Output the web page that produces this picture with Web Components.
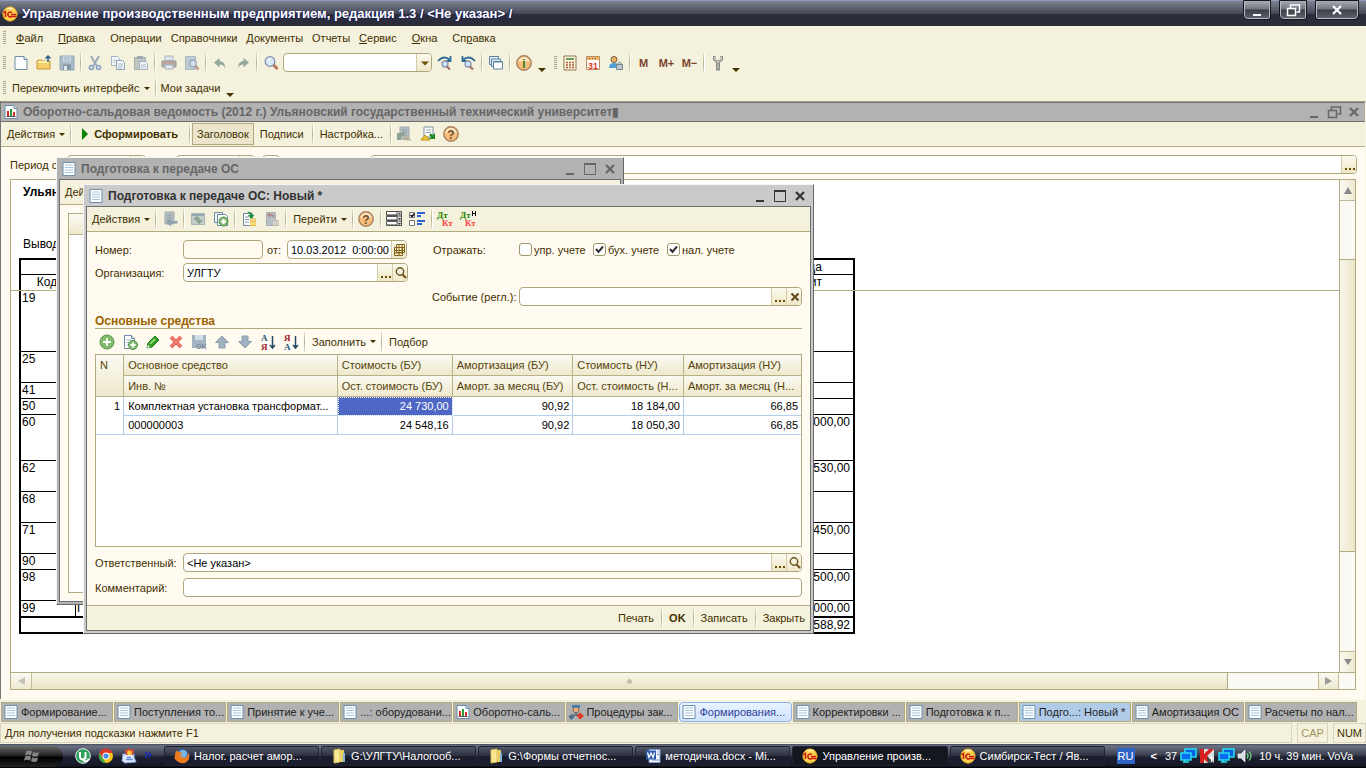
<!DOCTYPE html>
<html lang="ru">
<head>
<meta charset="utf-8">
<title>Управление производственным предприятием</title>
<style>
html, body { margin: 0; height: 100%; }
body { overflow: hidden; font: 11px/14px "Liberation Sans", Arial, sans-serif; color: #3f2f00; background: #f4f1dc; }
</style>
</head>
<body>
<enterprise-app></enterprise-app>
<script>
const define = (name, css, html) => {
  const tpl = document.createElement('template');
  customElements.define(name, class extends HTMLElement {
    connectedCallback() {
      if (this.shadowRoot) return;
      tpl.innerHTML = `<style>*{box-sizing:border-box}${css}</style>` + (typeof html === 'function' ? html(this) : html);
      this.attachShadow({ mode: 'open' }).append(tpl.content.cloneNode(true));
    }
  });
};

const page = '<path d="M2 1.5h9l3 3v10H2z" fill="#fdfeff" stroke="#6f8ca6"/><path d="M11 1.5v3h3" fill="#cfe0ee" stroke="#6f8ca6"/>';
const plus = (x, y, r) => `<circle cx="${x}" cy="${y}" r="${r}" fill="#7fbd6c" stroke="#5b9354"/><path d="M${x - r * .55} ${y}h${r * 1.1}M${x} ${y - r * .55}v${r * 1.1}" stroke="#fff" stroke-width="2"/>`;
const lens = '<circle cx="7" cy="6.500" r="4.800" fill="#dbe9f7" stroke="#7d8db5" stroke-width="1.300"/><path d="M4.500 5.500q1.500-2.500 4-1.500" stroke="#fff" fill="none"/><path d="M10.500 10l4 4" stroke="#b4735c" stroke-width="2.800"/>';
const grayPage = '<path d="M3 1h9v12H3z" fill="#b4bdc0" stroke="#a2acb0"/><path d="M5 4h5M5 6.500h5M5 9h5" stroke="#8f9a9e"/>';
const letters = (a, ca, b, cb) => `<text x="1" y="7" font-family="Liberation Serif,serif" font-weight="700" font-size="9" fill="${ca}">${a}</text><text x="1" y="16" font-family="Liberation Serif,serif" font-weight="700" font-size="9" fill="${cb}">${b}</text><path d="M12.500 2v11M10 11l2.500 3 2.500-3" stroke="#254a66" stroke-width="1.500" fill="none"/>`;
const ball = (ch, c) => `<circle cx="8" cy="8" r="7.200" fill="#f7bf7b" stroke="#a7815f" stroke-width="1.400"/><path d="M2.500 7a5.500 5 0 0 1 11 0q-5-2-11 0" fill="#ffe6bd"/><text x="8" y="12.500" text-anchor="middle" font-family="Liberation Sans,sans-serif" font-weight="700" font-size="12" fill="${c}">${ch}</text>`;
const ICONS = {
  onec: '<circle cx="8" cy="8" r="7.200" fill="#fbd24e" stroke="#d99a1c" stroke-width=".8"/><path d="M4 2.500q4-2 8 0q-4 2-8 0" fill="#fff3b8"/><path d="M1.500 7l2-1.500V11M9.800 6.600a2.400 2.400 0 1 0-.2 3.900H14.500M9 8.600h5" fill="none" stroke="#d11a10" stroke-width="1.500"/>',
  fresh: page,
  open: '<path d="M1 6l1-1h4l1 1h7v8H1z" fill="#f7cf68" stroke="#c79632"/><path d="M2 7h11" stroke="#ffeeb0" stroke-width="2"/><path d="M12 7V1M9.500 3.500L12 1l2.500 2.500" fill="none" stroke="#2d5f86" stroke-width="1.500"/>',
  save: '<path d="M1 1h14v14H1z" fill="#a9bac8" stroke="#93a8b8"/><path d="M4 1.500h8v5H4z" fill="#d4dee5"/><path d="M5 3h6M5 5h6" stroke="#9fb1bf"/><path d="M4 9.500h8V15H4z" fill="#8195a5"/><path d="M5 11h3v4H5z" fill="#dfe6ea"/>',
  cut: '<path d="M4 1l5.500 9.500M12 1L6.500 10.500" stroke="#9bacbd" stroke-width="2"/><circle cx="4.500" cy="12.500" r="2" fill="none" stroke="#839fc2" stroke-width="1.600"/><circle cx="11.500" cy="12.500" r="2" fill="none" stroke="#839fc2" stroke-width="1.600"/>',
  copy: '<path d="M1.500 1.500h6l2 2v7h-8z" fill="#f4f7fa" stroke="#9fb2c6"/><path d="M3 5h4M3 7h4" stroke="#b8c6d2"/><path d="M6.500 5.500h6l2 2v7h-8z" fill="#f4f7fa" stroke="#8da5be"/><path d="M8 9h5M8 11h5M8 13h4" stroke="#a9b9c8"/>',
  paste: '<path d="M1.500 2.500h11v12h-11z" fill="#c0c6be" stroke="#a5ada6"/><path d="M4 1h6v3H4z" fill="#9fabb1"/><path d="M6.500 6.500h6l2 2v6h-8z" fill="#eef2f4" stroke="#9fb2c6"/><path d="M8 10h5M8 12h5" stroke="#a9b9c8"/>',
  print: '<path d="M4 1h8v5H4z" fill="#dde5ec" stroke="#a8b4bf"/><path d="M1 6h14v6H1z" fill="#b3b0ae" stroke="#999"/><path d="M2 8h12" stroke="#cf9b8b"/><path d="M4 10h8v4H4z" fill="#e3e8ec" stroke="#a8b4bf"/>',
  preview: '<path d="M1.500 1.500h10v13h-10z" fill="#c0cbd4" stroke="#aab8c3"/><circle cx="9" cy="8.500" r="3.300" fill="#d6e0ea" stroke="#93a5b9" stroke-width="1.300"/><path d="M11.500 11l3 3.500" stroke="#c59788" stroke-width="2.400"/>',
  undo: '<path d="M2 7.500L7.500 3v3q6 .5 5.500 7.500q-1-4-5.500-4v3z" fill="#94a89b"/>',
  redo: '<path d="M14 7.500L8.500 3v3q-6 .5-5.500 7.500q1-4 5.500-4v3z" fill="#94a89b"/>',
  lens,
  findNext: '<path d="M1 6q6-6.500 12-1M13.500 1v5H9" fill="none" stroke="#2f6b92" stroke-width="1.800"/><circle cx="8" cy="9" r="3" fill="#d3e4fa" stroke="#8696b3" stroke-width="1.300"/><path d="M10 11.500l3 3" stroke="#a46f5e" stroke-width="2.200"/>',
  findPrev: '<path d="M15 6q-6-6.500-12-1M2.500 1v5H7" fill="none" stroke="#2f6b92" stroke-width="1.800"/><circle cx="8" cy="9" r="3" fill="#d3e4fa" stroke="#8696b3" stroke-width="1.300"/><path d="M10 11.500l3 3" stroke="#a46f5e" stroke-width="2.200"/>',
  windows: '<path d="M1.500 1.500h9v8h-9z" fill="#e3edf5" stroke="#5c85a4"/><path d="M3.500 4h9v7.500h-9z" fill="#dce8f2" stroke="#5c85a4"/><path d="M5.500 6.500h9v7.500h-9z" fill="#fff" stroke="#5c85a4"/><path d="M5.500 7h9" stroke="#5c85a4"/>',
  info: ball('i', '#2f7d1b'), help: ball('?', '#6b4b33'),
  calc: '<path d="M2 1h12v14H2z" fill="#fff4dc" stroke="#8d7755"/><path d="M4 3h8v2H4z" fill="#63a25b"/><path d="M4 7.500h8M4 10h8M4 12.500h8" stroke="#a85b3e" stroke-width="1.500" stroke-dasharray="2 1"/>',
  calendar: '<path d="M1.500 1.500h13v13h-13z" fill="#fff" stroke="#b88d63"/><path d="M2 2h12v3H2z" fill="#efb567"/><path d="M4 3.500h8" stroke="#845" stroke-dasharray="1 2"/><text x="8" y="13.500" text-anchor="middle" font-family="Liberation Sans,sans-serif" font-size="9" font-weight="700" fill="#e23a22">31</text>',
  userLock: '<circle cx="6" cy="4.500" r="3" fill="#f0b36a" stroke="#735639"/><path d="M1 13q0-5 5-5t5 5z" fill="#4fa2d8"/><path d="M8.500 9.500h6v5h-6z" fill="#bfc9cf" stroke="#72828d"/><path d="M10 9.500V8q1.500-2 3 0v1.500" fill="none" stroke="#72828d"/>',
  wrench: '<path d="M4.500 1q-1.500 5 3.500 5.500Q13 6 11.500 1" fill="none" stroke="#858783" stroke-width="2.600"/><path d="M8 6v9.500" stroke="#858783" stroke-width="4"/><path d="M4.500 2q-.5 4 3.500 4.500Q12 6 11.500 2M8 6.500v8" fill="none" stroke="#d9dad6"/>',
  report: page + '<path d="M5 12V7M11 12V8" stroke="#d92d2d" stroke-width="2"/><path d="M8 12V5" stroke="#2f9a3a" stroke-width="2"/><path d="M3.500 12.500h9" stroke="#555"/>',
  doc: '<path d="M2 1.500h12v13H2z" fill="#fbfdff" stroke="#6d90ab"/><path d="M4 4h8M4 6.500h8M4 9h8M4 11.500h8" stroke="#a9c5d8"/>',
  play: '<path d="M6 2l6 6-6 6z" fill="#078407"/>',
  loadGray: grayPage + '<path d="M0 7h5v-2l3 4-4 2v3H0z" fill="#8ea193"/><path d="M5 14l4-4 6 4.500z" fill="#b9b09c"/>',
  loadGreen: '<path d="M4 1h9v10H4z" fill="#fff" stroke="#7c8f9f"/><path d="M6 4h5M6 6.500h5" stroke="#90a6b5"/><path d="M15 7v6H9l2-2-2-2 2-1.500 2 1.500z" fill="#248a24"/><path d="M1 14l4-5 5 5z" fill="#ecc52e" stroke="#b8941c"/>',
  goBack: grayPage + '<path d="M15.500 10H9V7l-5 4.500 5 4v-3h6.500z" fill="#8fa0ae"/>',
  refresh: '<path d="M1.500 2.500h13v11h-13z" fill="#c2cccb" stroke="#aab5b8"/><path d="M2 4h12" stroke="#97a9b4" stroke-width="2"/><path d="M4 9l3-3v2h3M12 9l-3 3v-2H6" fill="none" stroke="#7d9b84" stroke-width="1.500"/>',
  copyAdd: '<path d="M1.500 1.500h8v10h-8z" fill="#eef3f7" stroke="#6f8ca6"/><path d="M4.500 3.500h8l2 2v9h-10z" fill="#fff" stroke="#6f8ca6"/>' + plus(10.5, 10.5, 4.5),
  post: '<path d="M2.500 2.500h9v12h-9z" fill="#fff" stroke="#6f8ca6"/><path d="M4 6h4M4 8.500h4M4 11h4" stroke="#7d97aa"/><path d="M6 1q5-1 5 3h2.500L10 8 7 4h2q0-2-3-3" fill="#23913a"/><path d="M9 9h6v6H9z" fill="#f0be38"/><path d="M9 11h6M9 13h6" stroke="#fff1b4"/><ellipse cx="12" cy="9" rx="3" ry="1.400" fill="#ffe696" stroke="#cf9b25" stroke-width=".6"/>',
  unpost: '<path d="M2.500 1.500h9v13h-9z" fill="#b7c0c6" stroke="#a5b0b8"/><path d="M10 7q1-4-4-4V1L3 4l3 3V5q3 0 4 2" fill="#b48684"/><path d="M9 9h6v6H9z" fill="#c4c0b0"/><path d="M9 11h6M9 13h6" stroke="#e0ddd0"/>',
  listView: '<path d="M.500 .500h15v4h-15zM.500 5.500h15v4h-15zM.500 10.500h15v4h-15z" fill="#fff" stroke="#555"/><path d="M1 3.500h10M1 8.500h10M1 13.500h10" stroke="#9a9a9a"/><path d="M11 .500h4.500v14H11z" fill="#ddd" stroke="#555"/><path d="M11 5h5M11 10h5" stroke="#555"/><path d="M12 3.500h3l-1.500-2zM12 7h3l-1.500 2zM12 12h3l-1.500 2z" fill="#333"/>',
  checks: '<path d="M.500 1.500h5v5h-5zM.500 9.500h5v5h-5z" fill="#fff" stroke="#777"/><path d="M1.500 4l1.500 1.500 2.500-3" fill="none" stroke="#000" stroke-width="1.300"/><path d="M8 2h8M8 5h4M8 10h8M8 13h5" stroke="#2b63d2" stroke-width="2"/>',
  dtkt: '<text x="0" y="7" font-family="Liberation Serif,serif" font-weight="700" font-size="9" fill="#267f00">Дт</text><text x="5" y="15" font-family="Liberation Serif,serif" font-weight="700" font-size="9" fill="#ff4040">Кт</text>',
  dtktn: '<text x="0" y="7" font-family="Liberation Serif,serif" font-weight="700" font-size="9" fill="#267f00">Дт</text><text x="5" y="15" font-family="Liberation Serif,serif" font-weight="700" font-size="9" fill="#ff4040">Кт</text><path d="M12.500 0v5M15.500 0v5M12 2.500h4" stroke="#111"/>',
  add: plus(8, 8, 7), addCopy: '<path d="M2.500 1.500h7l3 3v10h-10z" fill="#fff" stroke="#6f8ca6"/><path d="M9.500 1.500v3h3" fill="#cfe0ee" stroke="#6f8ca6"/><path d="M4.500 6h5M4.500 8.500h4M4.500 11h3" stroke="#9fb6c8"/>' + plus(11, 11, 4.5),
  edit: '<path d="M2 14l1-5 7-7 4 4-7 7z" fill="#35a025" stroke="#1e7414"/><path d="M5 10l5-5" stroke="#a5e58e" stroke-width="1.500"/><path d="M2 14l1-3 2 2z" fill="#fff"/>',
  del: '<path d="M3 3l10 10M13 3L3 13" stroke="#dc5046" stroke-width="3.500"/><path d="M3 3l10 10M13 3L3 13" stroke="#f6877b" stroke-width="1.500"/>',
  saveOk: '<path d="M1 1h14v13H1z" fill="#a3b5c3"/><path d="M4 1h8v5H4z" fill="#d4dee5"/><text x="5" y="14.500" font-family="Liberation Sans,sans-serif" font-weight="700" font-size="7" fill="#788b99">OK</text>',
  up: '<path d="M8 2l6.500 6.500H11V14H5V8.500H1.500z" fill="#9fb0bf" stroke="#8d9eac"/>',
  down: '<path d="M8 14l6.500-6.500H11V2H5v5.500H1.500z" fill="#9fb0bf" stroke="#8d9eac"/>',
  sortAsc: letters('А', '#235a7c', 'Я', '#a0202a'), sortDesc: letters('Я', '#a0202a', 'А', '#235a7c'),
  grid: '<path d="M2.500 5.500h8v8h-8zM4.500 2.500h8v8h-8z" fill="#fff4cc" stroke="#806019"/><path d="M3 8.500h9M3 11h7M5 5.500h7M7 3v10M10 3v8" fill="none" stroke="#806019"/>',
  search: '<circle cx="7" cy="6.500" r="3.700" fill="none" stroke="#6b5019" stroke-width="1.400"/><path d="M9.500 9.500l3.500 3.500" stroke="#6b5019" stroke-width="2"/>',
  cross: '<path d="M4.500 4.500l7 7M11.500 4.500l-7 7" stroke="#63491a" stroke-width="2"/>',
  dots: '<path d="M3 11h2v2H3zM7 11h2v2H7zM11 11h2v2h-2z" fill="#6b4c00"/>',
  caret: '<path d="M4 6.500h8l-4 4z" fill="#6b5208"/>',
  min: '<path d="M4 13h8" stroke="currentColor" stroke-width="2"/>',
  max: '<path d="M2.500 3h11v10.500h-11z" fill="none" stroke="currentColor"/><path d="M2 3h12" stroke="currentColor" stroke-width="2"/>',
  restore: '<path d="M5.500 6V3h9v7h-3" fill="none" stroke="currentColor" stroke-width="1.500"/><path d="M2.500 6.500h8v7h-8z" fill="none" stroke="currentColor" stroke-width="1.500"/>',
  close: '<path d="M4 4l8 8M12 4l-8 8" stroke="currentColor" stroke-width="2.200"/>',
  proc: '<path d="M4 1h8v3H4z" fill="#3d83b6"/><circle cx="8" cy="6" r="3" fill="#e2b084" stroke="#8a6a55"/><path d="M8 8v3H3v2M8 11h4" stroke="#5a6d7c" stroke-width="1.500" fill="none"/><path d="M0 12h7l-3.500 4z" fill="#49708f"/><path d="M12 8.500l4 3.500-4 3.500L8.500 12z" fill="#dd3b26"/>',
  folder: '<path d="M3 2l6-1v13l-6 1z" fill="#f8e793" stroke="#d8bd55"/><path d="M9 2h4v12H9z" fill="#e8ce62"/><path d="M12 5h2v9h-2z" fill="#7fb3d7"/>',
  word: '<path d="M4 1.500h11v13H4z" fill="#f7faff" stroke="#7b9bd0"/><path d="M12 4h2M12 6.500h2M7 12h7" stroke="#6a8bc4"/><path d="M1 2.500h10v9H1z" fill="#2c5bad"/><path d="M2.500 4.500l1.500 5 2-4.500 2 4.500 1.500-5" fill="none" stroke="#fff" stroke-width="1.300"/>',
  firefox: '<circle cx="8" cy="8" r="7" fill="#3066ad"/><circle cx="9" cy="6" r="4" fill="#79b4e6"/><path d="M2 2.500L5 4l3 .5-2 3 4 2.500q4-.5 4-5.500 3 4.500-.5 8.500T4.500 14 1 8q0-3 1-5.500" fill="#ee7c1d"/>',
  chrome: '<circle cx="8" cy="8" r="7" fill="#f5c51e"/><path d="M1.500 5A7 7 0 0 1 14.500 5H8L5 10z" fill="#da3b2a"/><path d="M1.500 5l4 6.500L8 15A7 7 0 0 1 1.500 5" fill="#3ea54a"/><circle cx="8" cy="8" r="3.500" fill="#fff"/><circle cx="8" cy="8" r="2.600" fill="#4a8be4"/>',
  torrent: '<circle cx="8" cy="8" r="7.300" fill="#2f9e5a" stroke="#e8f7ee"/><path d="M5 4v4.500q0 3 3 2.800 2.500 0 2.500-3V4v7M8 12q3 3 6-1" fill="none" stroke="#fff" stroke-width="2"/>',
  photos: '<path d="M2 6h11v3l2 5-11 1-3-2z" fill="#dce9fb" stroke="#8aa3dd"/><path d="M4 1l2 1 2-1.500L10.500 2 13 1l-1 6H5z" fill="#e9432f"/><circle cx="8.500" cy="5" r="2.400" fill="#ffc93f"/><path d="M5 11.500h7M6 9.500h4" stroke="#6d8de0" stroke-width="1.500"/>',
  net: '<path d="M5 1h11v8H5z" fill="#085fe0" stroke="#27dff4" stroke-width="1.500"/><path d="M1 5h10v7H1z" fill="#0a6af4" stroke="#27dff4" stroke-width="1.500"/><path d="M3 14h6M5 12v2" stroke="#27dff4" stroke-width="1.500"/>',
  kasper: '<path d="M1 1h14v14H1z" fill="#d8dedb"/><path d="M1 1h4v5l5-5h5L8 8l7 7H9L5 11v4H1z" fill="#d71f1f"/><path d="M8 8l7 7H9z" fill="#394b47"/><path d="M10 10h5M12.500 8v6" stroke="#fff"/>',
  sound: '<path d="M1 6h3l4-4v12l-4-4H1z" fill="#d7dadf" stroke="#fff" stroke-width=".7"/><path d="M10 5.500q2 2.500 0 5M12 3.500q4 4.500 0 9" fill="none" stroke="#62c573" stroke-width="1.400"/>',
  flag: '<path d="M2 3.500q3-2 6 0l-1 4q-3-2-6 0zM9 4q3 1.500 6 0l-1 4q-3 1.500-6 0zM1 8.800q3-2 6 0l-1 4q-3-2-6 0zM8 9.300q3 1.500 6 0l-1 4q-3 1.500-6 0z" fill="#858585"/>'
};

define('ui-icon', ':host{display:inline-flex;flex:none;width:16px;height:16px}svg{width:100%;height:100%;overflow:visible}',
  el => `<svg viewBox="0 0 16 16" aria-hidden="true">${ICONS[el.getAttribute('name')] || ''}</svg>`);

define('tool-grip', ':host{flex:none;width:3px;height:14px;margin:0 3px;background:repeating-linear-gradient(#aaa68c 0 1px,transparent 1px 2px)}', '');
define('tool-sep', ':host{flex:none;width:5px;height:20px;padding-left:2px}div{width:1px;height:20px;background:linear-gradient(#e4dfc0,#b5af90 50%,#e4dfc0);box-shadow:1px 0 #fff}', '<div></div>');

define('tool-button', `
:host{display:flex;flex:none;height:22px}
button{display:flex;align-items:center;justify-content:center;height:100%;min-width:23px;margin:0;padding:0;border:1px solid transparent;background:none;font:inherit;color:inherit;white-space:nowrap}
:host([text]) button{padding:0 var(--pad,4px)}
:host([menu]) button{padding-right:2px}
:host([icon][text]) button{padding:0 8px 0 2px;gap:2px}
:host([pressed]) button{background:#ebe6cb;border-color:#b1a980;padding:0 4px}
:host([bold]) button{font-weight:700}
i{width:0;border:3px solid transparent;border-top-color:currentColor;border-bottom:0;margin-left:4px}`,
  el => `<button type="button" aria-label="${el.textContent || el.getAttribute('icon') || ''}">${el.hasAttribute('icon') ? `<ui-icon name="${el.getAttribute('icon')}"></ui-icon>` : ''}<slot></slot>${el.hasAttribute('menu') ? '<i></i>' : ''}</button>`);

define('more-arrow', ':host{flex:none;width:14px;height:22px;padding:16px 0 0 3px}i{display:block;width:0;border:4px solid transparent;border-top-color:#453300;border-bottom:0}', '<i></i>');

define('app-title', `
:host{display:flex;flex:none;height:26px;align-items:center;padding:0 8px 0 2px;border-top:1px solid #929dbd;background:linear-gradient(#7d8291,#454857 50%,#2b2d3b 52%,#2a2c3a);color:#fff}
h1{flex:1;margin:0 0 0 4px;font:700 13px/18px "Liberation Sans",sans-serif;text-shadow:1px 1px #20255a,-1px 0 #20255a}
div{display:flex;gap:10px;align-self:flex-start}
button{width:26px;height:18px;padding:0;border:1px solid #b9bcc2;border-top:0;border-radius:0 0 2px 4px;outline:1px solid #15161c;background:linear-gradient(#a9acb4,#70747d 48%,#3c3f47 52%,#5b6068);color:#fff;display:grid;place-items:center}
button:last-child{width:42px;border-radius:0 0 4px 2px}`,
  `<ui-icon name="onec"></ui-icon><h1>Управление производственным предприятием, редакция 1.3 / &lt;Не указан&gt; /</h1>
<div><button aria-label="Свернуть"><ui-icon name="min"></ui-icon></button><button aria-label="Развернуть"><ui-icon name="restore"></ui-icon></button><button aria-label="Закрыть"><ui-icon name="close"></ui-icon></button></div>`);

define('menu-bar', `
:host{display:flex;flex:none;height:24px;align-items:center}
nav{display:flex;padding-left:7px;gap:9px}
button{padding:0;border:0;background:none;font:inherit;color:inherit}
button.key{padding-right:6px}`,
  `<tool-grip></tool-grip><nav>${['_Файл', '_Правка', 'Операции', 'Справочники', 'Документы', 'Отчеты', '_Сервис', '_Окна', 'Сп_равка'].map(t => `<button${t.includes('_') ? ' class="key"' : ''}>${t.replace(/_(.)/, '<u>$1</u>')}</button>`).join('')}</nav>`);

define('tool-bar', ':host{display:flex;flex:none;align-items:center;height:24px}', '<slot></slot>');

define('text-field', `
:host{display:flex;align-items:center}
label{flex:none;width:var(--label,88px)}
div{display:flex;flex:1;min-width:0;height:19px;border:1px solid #b0a67c;border-radius:4px;background:#fff;overflow:hidden}
input{flex:1;width:0;min-width:0;border:0;padding:0 0 0 3px;background:none;font:inherit;color:#000;outline:0}
:host([soft]) div{background:#fffbf0}
button{flex:none;width:15px;padding:0;border:0;border-left:1px solid #d3cca5;background:linear-gradient(#fbf9ef,#eee8c8);display:grid;place-items:center}`,
  el => `${el.hasAttribute('label') ? `<label for="f">${el.getAttribute('label')}</label>` : ''}<div><input id="f" type="text" value="${el.getAttribute('value') || ''}" aria-label="${el.getAttribute('label') || el.getAttribute('hint') || ''}">${(el.getAttribute('buttons') || '').split(',').filter(Boolean).map(b => `<button type="button" aria-label="${b}"><ui-icon name="${b}"></ui-icon></button>`).join('')}</div>`);

define('check-field', `
:host{display:flex;width:74px}
label{display:flex;align-items:center;gap:2px;white-space:nowrap}
input{appearance:none;width:13px;height:13px;margin:0;border:1px solid #9f956b;border-radius:3px;background:#fff}
input:checked{background:#fff url("data:image/svg+xml,%3Csvg xmlns='http://www.w3.org/2000/svg' viewBox='0 0 11 11'%3E%3Cpath d='M2 5l2.500 3L9 2.500' fill='none' stroke='%23333' stroke-width='2'/%3E%3C/svg%3E")}`,
  el => `<label><input type="checkbox"${el.hasAttribute('checked') ? ' checked' : ''}><span><slot></slot></span></label>`);

define('app-window', `
:host{position:absolute;display:flex;flex-direction:column;border:1px solid #666;border-top-color:#f5f5f5;border-left-color:#f5f5f5;background:#b2b2b2;padding:0 2px 2px;color:#3f2f00}
:host([active]){background:#cacaca}
header{display:flex;flex:none;align-items:center;height:21px;padding:0 1px 0 2px;color:#666}
:host([active]) header{color:#333}
h2{flex:1;margin:0 0 0 4px;font:700 12px/16px "Liberation Sans",sans-serif;white-space:nowrap}
header button{width:20px;height:18px;margin:0;padding:0;border:0;background:none;color:inherit;display:grid;place-items:center}
section{display:flex;flex:1;min-height:0;flex-direction:column;border:1px solid #6e6e6e;background:#fffbf0}
.bar{background:#f4f1dc;border-bottom:1px solid #b3ab80;flex:none;overflow:hidden}
main{flex:1;min-height:0;display:flex;flex-direction:column}
:host([max]){position:static;flex:1;min-height:0;padding:0;border:0;border-top:1px solid #a39f8c;border-right:1px solid #f8f5e4}
:host([max]) section{border-width:1px 0 0 0}
:host([max]) header{height:19px;border-top:1px solid #777;padding:0 1px 0 2px}`,
  el => `<header><ui-icon name="${el.getAttribute('icon')}"></ui-icon><h2>${el.getAttribute('heading')}</h2>
<button aria-label="Свернуть"><ui-icon name="min"></ui-icon></button><button aria-label="Развернуть"><ui-icon name="${el.hasAttribute('max') ? 'restore' : 'max'}"></ui-icon></button><button aria-label="Закрыть"><ui-icon name="close"></ui-icon></button></header>
<section><div class="bar"><slot name="toolbar"></slot></div><main><slot></slot></main></section>`);

const rows = [['19', 61], ['25', 31], ['41', 16], ['50', 16], ['60', 46, '000,00'], ['62', 31, '530,00'], ['68', 31], ['71', 31, '450,00'], ['90', 16], ['98', 31, '500,00'], ['99', 16, '000,00', 'П']];
define('report-sheet', `
:host{display:flex;flex:1;min-height:0;flex-direction:column;margin:5px 9px 9px 9px;border:1px solid #b3ab80;background:#fff;color:#000;font-size:12px}
.top{display:flex;flex:1;min-height:0}
.paper{position:relative;flex:1;overflow:hidden}
b,p{display:block;margin:0;padding-left:12px;line-height:16px}
b{padding-top:4px}p{padding-top:36px}
.split{position:absolute;top:110px;left:0;right:0;height:1px;background:#b3ab80}
table{width:836px;margin:6px 0 0 8px;table-layout:fixed;border:2px solid #000;border-spacing:0;line-height:15px}
td,th{padding:0 3px 0 1px;border-top:1px solid #000;border-right:1px solid #000;font-weight:400;vertical-align:top;white-space:nowrap;overflow:hidden}
th{text-align:center}
tr>:last-child{border-right:0;text-align:right}
tr>th:last-child{padding-right:31px}
thead tr:first-child th{border-top:0;line-height:14px}
tfoot td{border-top-width:2px;border-right:0;line-height:14px}
.v{display:flex;flex:none;flex-direction:column;width:16px;border-left:1px solid #b3ab80;background:#faf9f4}
.h{display:flex;flex:none;height:17px;border-top:1px solid #b3ab80;background:#faf9f4}
.btn,.thumb{display:grid;place-items:center}
.v .btn{height:21px;border-bottom:1px solid #c3bb94;background:linear-gradient(90deg,#fbfaf3,#eee9cf)}
.v .gap{flex:59}.v .thumb{flex:293;border:solid #b3ab80;border-width:1px 0;background:linear-gradient(90deg,#f7f5e9,#ece7c9)}
.v .gap.two{flex:100}.v .btn.dn{border-top:1px solid #c3bb94;border-bottom:0}
.h .btn{width:21px;background:linear-gradient(#fbfaf3,#eee9cf);border-right:1px solid #c3bb94}
.h .thumb{flex:1197;border-right:1px solid #b3ab80;background:linear-gradient(#f7f5e9,#e9e4c2)}
.h .gap{flex:90}.h .btn.r{border-left:1px solid #c3bb94}.h .corner{width:16px}
i{width:0;border:4px solid transparent}
.u{border-bottom:7px solid #888;border-top:0}.d{border-top:6px solid #888;border-bottom:0}
.l{border-right:7px solid #c4c2b8;border-left:0}.rr{border-left:7px solid #999;border-right:0}
em{width:5px;height:5px;border-radius:50%;background:#c5c1ac}`,
  `<div class="top"><div class="paper"><b>Ульян</b><p>Вывод</p>
<table><colgroup><col style="width:55px"><col><col style="width:98px"><col style="width:98px"><col style="width:98px"><col style="width:98px"><col style="width:98px"><col style="width:99px"></colgroup>
<thead><tr style="height:14px"><th colspan="2"></th><th colspan="2"></th><th colspan="2"></th><th colspan="2">да</th></tr>
<tr style="height:16px"><th>Код</th><th></th><th></th><th></th><th></th><th></th><th></th><th>ит</th></tr></thead>
<tbody>${rows.map(([c, h, v = '', n = '']) => `<tr style="height:${h}px"><td>${c}</td><td>${n}</td><td></td><td></td><td></td><td></td><td></td><td>${v}</td></tr>`).join('')}</tbody>
<tfoot><tr style="height:16px"><td colspan="7"></td><td>588,92</td></tr></tfoot></table><div class="split"></div></div>
<div class="v"><div class="btn"><i class="u"></i></div><div class="gap"></div><div class="thumb"></div><div class="gap two"></div><div class="btn dn"><i class="d"></i></div></div></div>
<div class="h"><div class="btn"><i class="l"></i></div><div class="thumb"><em></em></div><div class="gap"></div><div class="btn r"><i class="rr"></i></div><div class="corner"></div></div>`);

define('period-row', ':host{display:flex;flex:none;align-items:center;padding:8px 8px 0 9px;height:27px;white-space:nowrap}text-field.d{width:79px}text-field.t{margin-left:30px}text-field.s{width:18px;margin-left:7px;margin-right:90px}span{width:57px}text-field.w{flex:1}',
  '<span>Период с</span><text-field class="d" hint="Начало" buttons="grid"></text-field><text-field class="d t" hint="Конец" buttons="grid"></text-field><text-field class="s" hint="Период"></text-field><text-field class="w" hint="Организация" buttons="dots"></text-field>');

define('asset-grid', `
:host{display:block;flex:1;min-height:0;border:1px solid #b3ab80;background:#fff;overflow:hidden}
table{width:100%;table-layout:fixed;border-spacing:0;color:#000}
th,td{padding:0 4px;white-space:nowrap;overflow:hidden;text-overflow:ellipsis}
th{height:21px;border-right:1px solid #b9b188;border-bottom:1px solid #b9b188;background:linear-gradient(#fbfaf3,#eee9cc);font-weight:400;color:#55430c;text-align:left}
th[rowspan]{vertical-align:top;line-height:20px}
td{height:19px;border-right:1px solid #b3cbe8;border-bottom:1px solid #b3d0ec;text-align:right;padding-right:3px}
td[rowspan]{vertical-align:top;line-height:19px}
td.t{text-align:left}
tr>*:last-child{border-right:0}
td.sel{background:#4f67c4;color:#fff;outline:1px dotted #fff;outline-offset:-1px}`,
  `<table><colgroup><col style="width:4%"><col style="width:30.300%"><col style="width:16.300%"><col style="width:17.100%"><col style="width:15.700%"><col></colgroup>
<thead><tr><th rowspan="2">N</th><th>Основное средство</th><th>Стоимость (БУ)</th><th>Амортизация (БУ)</th><th>Стоимость (НУ)</th><th>Амортизация (НУ)</th></tr>
<tr><th>Инв. №</th><th>Ост. стоимость (БУ)</th><th>Аморт. за месяц (БУ)</th><th>Ост. стоимость (Н...</th><th>Аморт. за месяц (Н...</th></tr></thead>
<tbody><tr><td rowspan="2">1</td><td class="t">Комплектная установка трансформат...</td><td class="sel">24 730,00</td><td>90,92</td><td>18 184,00</td><td>66,85</td></tr>
<tr><td class="t">000000003</td><td>24 548,16</td><td>90,92</td><td>18 050,30</td><td>66,85</td></tr></tbody></table>`);

define('transfer-form', `
:host{display:flex;flex:1;min-height:0;flex-direction:column}
.body{display:flex;flex:1;min-height:0;flex-direction:column;padding:8px}
.row{display:flex;align-items:center;height:19px;margin-bottom:4px}
.num{width:168px}.date{width:140px;--label:20px;margin-left:4px}
.show{width:86px;margin-left:26px}
.org{width:313px}
.event{--label:87px;margin:1px 0 0 337px;flex:none}
h3{margin:6px 0 0;padding-top:2px;font:700 12px/14px "Liberation Sans",sans-serif;color:#9b6400;border-bottom:1px solid #b3ab80}
tool-bar{height:25px;flex:none}
.resp{margin:6px 0;flex:none}
footer{display:flex;flex:none;justify-content:flex-end;align-items:center;height:24px;border-top:1px solid #b3ab80;background:#f4f1dc;box-sizing:content-box}`,
  `<div class="body"><div class="row"><text-field class="num" soft label="Номер:"></text-field><text-field class="date" label="от:" value="10.03.2012  0:00:00" buttons="grid"></text-field>
<span class="show">Отражать:</span><check-field>упр. учете</check-field><check-field checked>бух. учете</check-field><check-field checked>нал. учете</check-field></div>
<div class="row"><text-field class="org" label="Организация:" value="УЛГТУ" buttons="dots,search"></text-field></div>
<text-field class="event" label="Событие (регл.):" buttons="dots,cross"></text-field>
<h3>Основные средства</h3>
<tool-bar><tool-button icon="add"></tool-button><tool-button icon="addCopy"></tool-button><tool-button icon="edit"></tool-button><tool-button icon="del"></tool-button><tool-button icon="saveOk"></tool-button><tool-button icon="up"></tool-button><tool-button icon="down"></tool-button><tool-button icon="sortAsc"></tool-button><tool-button icon="sortDesc"></tool-button><tool-sep></tool-sep><tool-button text menu>Заполнить</tool-button><tool-sep></tool-sep><tool-button text>Подбор</tool-button></tool-bar>
<asset-grid></asset-grid>
<text-field class="resp" label="Ответственный:" value="&lt;Не указан&gt;" buttons="dots,search"></text-field>
<text-field label="Комментарий:"></text-field></div>
<footer><tool-button text>Печать</tool-button><tool-sep></tool-sep><tool-button text bold>OK</tool-button><tool-sep></tool-sep><tool-button text>Записать</tool-button><tool-sep></tool-sep><tool-button text>Закрыть</tool-button></footer>`);

define('empty-list', ':host{display:block;flex:1;margin:8px;border:1px solid #b3ab80;background:#fff}div{height:21px;border-bottom:1px solid #b9b188;background:linear-gradient(#fbfaf3,#eee9cc)}', '<div></div>');

define('window-tabs', `
:host{display:flex;flex:none;gap:1px;padding:2px 9px 2px 1px;height:24px;border-top:1px solid #fffdf5}
button{flex:1;width:0;display:flex;align-items:center;gap:2px;height:20px;padding:0 0 0 1px;border:1px solid #b3ab80;background:#b1b1b1;color:#222;font:inherit;white-space:nowrap;overflow:hidden}
.hot{border-color:#8fb0ea;border-radius:4px;background:linear-gradient(#e8f3ff,#cfe3fd);color:#2f3f9a}
.now{background:#b0cbe8}`,
  [['doc', 'Формирование...'], ['doc', 'Поступления то...'], ['doc', 'Принятие к уче...'], ['doc', '...: оборудовани...'], ['report', 'Оборотно-саль...'], ['proc', 'Процедуры зак...'], ['doc', 'Формирования...', 'hot'], ['doc', 'Корректировки ...'], ['doc', 'Подготовка к п...'], ['doc', 'Подго...: Новый *', 'now'], ['doc', 'Амортизация ОС'], ['doc', 'Расчеты по нал...']]
    .map(([i, t, c = '']) => `<button class="${c}"><ui-icon name="${i}"></ui-icon>${t}</button>`).join(''));

define('status-bar', `
:host{display:flex;flex:none;gap:5px;height:21px;padding-bottom:1px}
span{height:20px;border:1px solid #d9d5bc;padding:0 3px;line-height:18px}
.msg{flex:1;padding-left:4px}.off{color:#a1935f}`,
  '<span class="msg">Для получения подсказки нажмите F1</span><span class="off">CAP</span><span>NUM</span>');

define('task-bar', `
:host{display:flex;flex:none;height:24px;align-items:center;background:linear-gradient(#444a5b,#6c7285 8%,#3c4050 45%,#1d2030 55%,#151827 90%,#000);color:#fff}
.start{width:63px;height:21px;padding:0;border:0;border-radius:0 10px 10px 0;background:linear-gradient(#6a6a6a,#222 45%,#000 55%,#222);display:grid;place-items:center}
.quick{display:flex;align-items:center;gap:7px;padding:0 0 0 12px;width:101px}
.quick b{padding-bottom:4px;color:#1b2aa8;font-size:15px}
.tasks{display:flex;flex:1;gap:2px;padding-right:12px}
.tasks button{flex:1;width:0;height:20px;display:flex;align-items:center;gap:4px;padding:0 0 0 9px;border:1px solid #20232f;border-radius:2px;background:linear-gradient(#515666,#2c2f3e 50%,#191c2a 52%,#1c1f2f);color:#fff;font:inherit;white-space:nowrap;overflow:hidden}
.tasks button.on{background:#141620}
.lang{padding:1px 1px;background:#2f63c4}
.tray{display:flex;align-items:center;gap:3px;padding:0 13px 0 16px;white-space:nowrap}
.tray b{padding-right:5px}.tray time{padding-left:3px}`,
  `<button class="start" aria-label="Пуск"><ui-icon name="flag"></ui-icon></button>
<div class="quick"><ui-icon name="torrent"></ui-icon><ui-icon name="chrome"></ui-icon><ui-icon name="photos"></ui-icon><b>»</b></div>
<div class="tasks"><button><ui-icon name="firefox"></ui-icon>Налог. расчет амор...</button><button><ui-icon name="folder"></ui-icon>G:\\УЛГТУ\\Налогооб...</button><button><ui-icon name="folder"></ui-icon>G:\\Формы отчетнос...</button><button><ui-icon name="word"></ui-icon>методичка.docx - Mi...</button><button class="on"><ui-icon name="onec"></ui-icon>Управление произв...</button><button><ui-icon name="onec"></ui-icon>Симбирск-Тест / Яв...</button></div>
<span class="lang">RU</span><div class="tray"><b>&lt;</b><span>37</span><ui-icon name="net"></ui-icon><ui-icon name="kasper"></ui-icon><ui-icon name="net"></ui-icon><ui-icon name="sound"></ui-icon><time>10 ч. 39 мин. VoVa</time></div>`);

const tb = names => names.split(' ').map(n => n === '|' ? '<tool-sep></tool-sep>' : `<tool-button icon="${n}"></tool-button>`).join('');
define('enterprise-app', `
:host{display:flex;flex-direction:column;height:100vh}
.main-tools{height:25px}
.user-tools{height:26px;--pad:2px}
.report-tools{--pad:5px}
.slim{--pad:4px}
.find{width:149px;margin:0 1px}
.mem{font-weight:700;color:#7b432a}
.desk{position:relative;display:flex;flex:1;min-height:0;flex-direction:column;overflow:hidden;border-left:1px solid #777}
.list{left:55px;top:56px;width:568px;height:448px}
.edit{left:82px;top:83px;width:731px;height:450px}
.grip2{margin:0 1px 0 5px}`,
  `<app-title></app-title><menu-bar></menu-bar>
<tool-bar class="main-tools"><tool-grip></tool-grip>${tb('fresh open save | cut copy paste | print preview | undo redo | lens')}<text-field class="find" hint="Поиск" buttons="caret"></text-field>${tb('findNext findPrev | windows | info')}<more-arrow></more-arrow><tool-grip class="grip2"></tool-grip>${tb('calc calendar userLock |')}<tool-button class="mem">M</tool-button><tool-button class="mem">M+</tool-button><tool-button class="mem">M−</tool-button>${tb('| wrench')}<more-arrow></more-arrow></tool-bar>
<tool-bar class="user-tools"><tool-grip></tool-grip><tool-button text menu>Переключить интерфейс</tool-button><tool-sep></tool-sep><tool-button text>Мои задачи</tool-button><more-arrow></more-arrow></tool-bar>
<div class="desk">
<app-window max icon="report" heading="Оборотно-сальдовая ведомость (2012 г.) Ульяновский государственный технический университет▮"><tool-bar class="report-tools" slot="toolbar"><tool-button text menu>Действия</tool-button><tool-sep></tool-sep><tool-button icon="play" text bold>Сформировать</tool-button><tool-sep></tool-sep><tool-button text pressed>Заголовок</tool-button><tool-button text>Подписи</tool-button><tool-sep></tool-sep><tool-button class="slim" text>Настройка...</tool-button><tool-sep></tool-sep>${tb('loadGray loadGreen help')}</tool-bar><period-row></period-row><report-sheet></report-sheet></app-window>
<app-window class="list" icon="doc" heading="Подготовка к передаче ОС"><tool-bar slot="toolbar"><tool-button text>Дей</tool-button></tool-bar><empty-list></empty-list></app-window>
<app-window class="edit" active icon="doc" heading="Подготовка к передаче ОС: Новый *"><tool-bar slot="toolbar"><tool-button text menu>Действия</tool-button>${tb('| goBack | refresh copyAdd | post unpost |')}<tool-button text menu>Перейти</tool-button>${tb('| help | listView checks | dtkt dtktn')}</tool-bar><transfer-form></transfer-form></app-window>
</div><window-tabs></window-tabs><status-bar></status-bar><task-bar></task-bar>`);
</script>
</body>
</html>
